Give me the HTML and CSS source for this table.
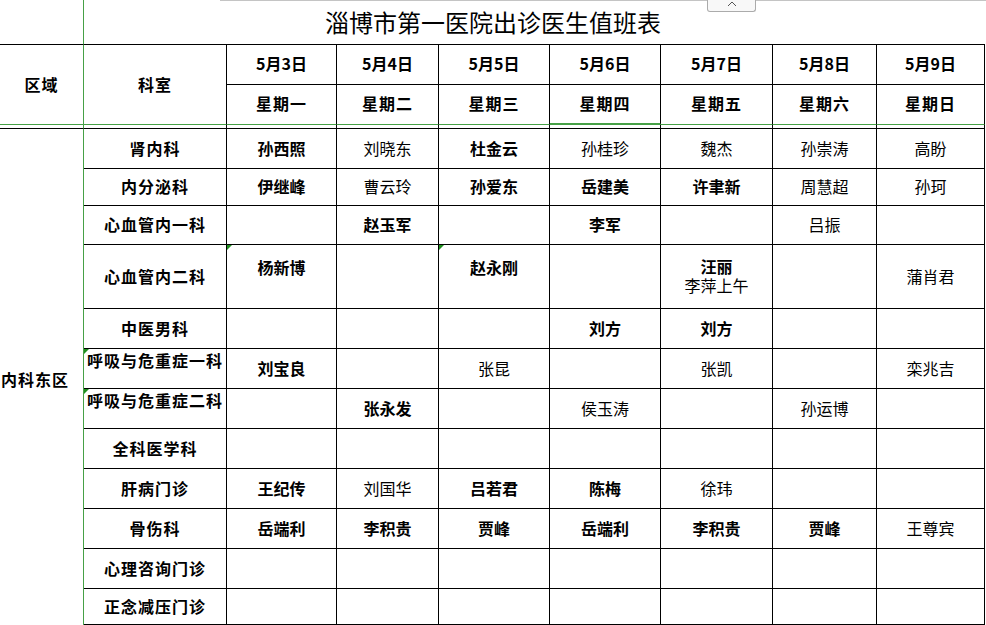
FILE: index.html
```html
<!DOCTYPE html>
<html lang="zh-CN">
<head>
<meta charset="utf-8">
<title>淄博市第一医院出诊医生值班表</title>
<link rel="stylesheet" href="styles.css">
</head>
<body>
<div class="topline"></div>
<div class="collapse"><svg width="10" height="6" viewBox="0 0 10 6"><polyline points="1,5 5,1 9,5" fill="none" stroke="#555" stroke-width="1"/></svg></div>
<div class="sheet">
  <div class="c blank"></div>
  <div class="c title">淄博市第一医院出诊医生值班表</div>

  <div class="c region-h">区域</div>
  <div class="c dept-h">科室</div>
  <div class="c h">5月3日</div>
  <div class="c h">5月4日</div>
  <div class="c h">5月5日</div>
  <div class="c h">5月6日</div>
  <div class="c h">5月7日</div>
  <div class="c h">5月8日</div>
  <div class="c h">5月9日</div>

  <div class="c h wk">星期一</div>
  <div class="c h wk">星期二</div>
  <div class="c h wk">星期三</div>
  <div class="c h wk sel">星期四</div>
  <div class="c h wk">星期五</div>
  <div class="c h wk">星期六</div>
  <div class="c h wk">星期日</div>

  <div class="c sp first"></div>
  <div class="c sp"></div>
  <div class="c sp"></div>
  <div class="c sp"></div>
  <div class="c sp"></div>
  <div class="c sp"></div>
  <div class="c sp"></div>
  <div class="c sp"></div>
  <div class="c sp"></div>

  <div class="c region">内科东区</div>

  <div class="c d">肾内科</div>
  <div class="c b">孙西照</div>
  <div class="c n">刘晓东</div>
  <div class="c b">杜金云</div>
  <div class="c n">孙桂珍</div>
  <div class="c n">魏杰</div>
  <div class="c n">孙崇涛</div>
  <div class="c n">高盼</div>

  <div class="c d">内分泌科</div>
  <div class="c b">伊继峰</div>
  <div class="c n">曹云玲</div>
  <div class="c b">孙爱东</div>
  <div class="c b">岳建美</div>
  <div class="c b">许聿新</div>
  <div class="c n">周慧超</div>
  <div class="c n">孙珂</div>

  <div class="c d">心血管内一科</div>
  <div class="c"></div>
  <div class="c b">赵玉军</div>
  <div class="c"></div>
  <div class="c b">李军</div>
  <div class="c"></div>
  <div class="c n">吕振</div>
  <div class="c"></div>

  <div class="c d">心血管内二科</div>
  <div class="c b up tri">杨新博</div>
  <div class="c"></div>
  <div class="c b up tri">赵永刚</div>
  <div class="c"></div>
  <div class="c two"><span class="bold">汪丽</span><span>李萍上午</span></div>
  <div class="c"></div>
  <div class="c n">蒲肖君</div>

  <div class="c d">中医男科</div>
  <div class="c"></div>
  <div class="c"></div>
  <div class="c"></div>
  <div class="c b">刘方</div>
  <div class="c b">刘方</div>
  <div class="c"></div>
  <div class="c"></div>

  <div class="c d tl tri">呼吸与危重症一科</div>
  <div class="c b">刘宝良</div>
  <div class="c"></div>
  <div class="c n">张昆</div>
  <div class="c"></div>
  <div class="c n">张凯</div>
  <div class="c"></div>
  <div class="c n">栾兆吉</div>

  <div class="c d tl tri">呼吸与危重症二科</div>
  <div class="c"></div>
  <div class="c b">张永发</div>
  <div class="c"></div>
  <div class="c n">侯玉涛</div>
  <div class="c"></div>
  <div class="c n">孙运博</div>
  <div class="c"></div>

  <div class="c d">全科医学科</div>
  <div class="c"></div>
  <div class="c"></div>
  <div class="c"></div>
  <div class="c"></div>
  <div class="c"></div>
  <div class="c"></div>
  <div class="c"></div>

  <div class="c d">肝病门诊</div>
  <div class="c b">王纪传</div>
  <div class="c n">刘国华</div>
  <div class="c b">吕若君</div>
  <div class="c b">陈梅</div>
  <div class="c n">徐玮</div>
  <div class="c"></div>
  <div class="c"></div>

  <div class="c d">骨伤科</div>
  <div class="c b">岳端利</div>
  <div class="c b">李积贵</div>
  <div class="c b">贾峰</div>
  <div class="c b">岳端利</div>
  <div class="c b">李积贵</div>
  <div class="c b">贾峰</div>
  <div class="c n">王尊宾</div>

  <div class="c d">心理咨询门诊</div>
  <div class="c"></div>
  <div class="c"></div>
  <div class="c"></div>
  <div class="c"></div>
  <div class="c"></div>
  <div class="c"></div>
  <div class="c"></div>

  <div class="c d">正念减压门诊</div>
  <div class="c"></div>
  <div class="c"></div>
  <div class="c"></div>
  <div class="c"></div>
  <div class="c"></div>
  <div class="c"></div>
  <div class="c"></div>
</div>
</body>
</html>
```
FILE: styles.css
```css
html, body {
  margin: 0;
  padding: 0;
  background: #fff;
  overflow: hidden;
}
body {
  position: relative;
  width: 986px;
  height: 625px;
  font-family: "Noto Sans CJK SC", "Noto Sans", sans-serif;
  color: #000;
}
.topline {
  position: absolute;
  left: 220px;
  right: 0;
  top: 0;
  height: 1px;
  background: #c4c4c4;
  z-index: 2;
}
.collapse {
  position: absolute;
  left: 707px;
  top: -1px;
  width: 47px;
  height: 12px;
  border: 1px solid #ababab;
  border-top: 0;
  border-radius: 0 0 3px 3px;
  background: #f8f8f8;
  display: flex;
  align-items: center;
  justify-content: center;
  z-index: 3;
}
.collapse svg {
  display: block;
  margin-top: -2px;
}
.sheet {
  display: grid;
  grid-template-columns: 84px 143px 110px 102px 111px 111px 112px 104px 108px;
  grid-template-rows: 45px 40px 40px 4px 40px 37px 39px 64px 40px 40px 40px 40px 40px 40px 40px 36px;
  font-size: 16px;
}
.c {
  box-sizing: border-box;
  position: relative;
  border-right: 1px solid #000;
  border-bottom: 1px solid #000;
  display: flex;
  align-items: center;
  justify-content: center;
  line-height: 20px;
  white-space: nowrap;
  padding-bottom: 2px;
}
.blank {
  border-right-color: #46a046;
}
.title {
  grid-column: 2 / span 8;
  border-right: 0;
  justify-content: flex-start;
  padding-left: 241px;
  padding-bottom: 1px;
  font-size: 24px;
  font-weight: 400;
  line-height: 30px;
}
.region-h {
  grid-row: span 2;
  border-right-color: #46a046;
  border-bottom-color: #46a046;
  font-weight: 700;
  letter-spacing: 1px;
}
.dept-h {
  grid-row: span 2;
  border-bottom-color: #46a046;
  font-weight: 700;
  letter-spacing: 1px;
}
.h {
  font-weight: 700;
  padding-bottom: 3px;
}
.wk {
  border-bottom-color: #46a046;
  letter-spacing: 1px;
}
.sel {
  border-bottom: 2px solid #46a046;
}
.sp {
  padding: 0;
}
.sp.first {
  border-right-color: #46a046;
}
.region {
  grid-row: span 12;
  border-right-color: #46a046;
  border-bottom: 0;
  justify-content: flex-start;
  padding: 4px 0 0 1px;
  font-weight: 700;
  letter-spacing: 1px;
}
.d {
  font-weight: 700;
  letter-spacing: 1px;
}
.tl {
  justify-content: flex-start;
  align-items: flex-start;
  padding: 1px 0 0 3px;
}
.b {
  font-weight: 700;
}
.n {
  font-weight: 400;
}
.up {
  padding-bottom: 19px;
}
.two {
  flex-direction: column;
  line-height: 19px;
}
.two .bold {
  font-weight: 700;
}
.tri::before {
  content: "";
  position: absolute;
  left: 0;
  top: 0;
  border-top: 5px solid #1f8f1f;
  border-right: 5px solid transparent;
}
```
